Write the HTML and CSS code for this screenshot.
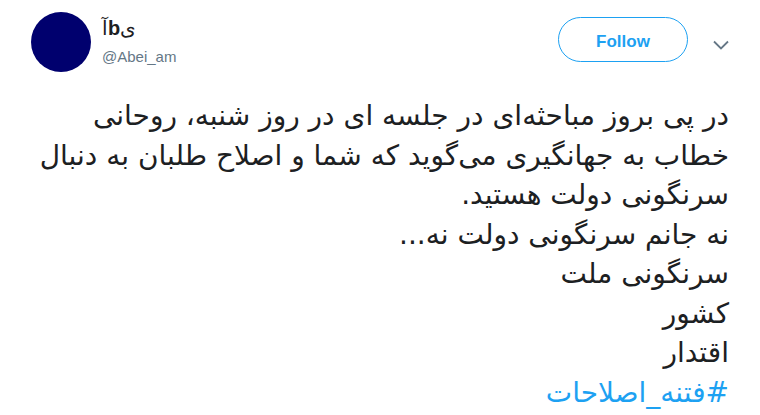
FILE: index.html
```html
<!DOCTYPE html>
<html lang="fa">
<head>
<meta charset="utf-8">
<title>Tweet</title>
<link rel="stylesheet" href="styles.css">
</head>
<body>
<div class="tweet">
	<div class="head">
		<div class="avatar"></div>
		<div class="who">
			<div class="name" dir="ltr">آ<b>b</b>ی</div>
			<div class="handle">@Abei_am</div>
		</div>
		<a class="follow" href="#">Follow</a>
		<svg class="more" width="16" height="10" viewBox="0 0 16 10"><path d="M1 1.5 L8 8.5 L15 1.5" fill="none" stroke="#657786" stroke-width="1.8"/></svg>
	</div>
	<p class="text" dir="rtl">در پی بروز مباحثه‌ای در جلسه ای در روز شنبه، روحانی خطاب به جهانگیری می‌گوید که شما و اصلاح طلبان به دنبال سرنگونی دولت هستید.<br>نه جانم سرنگونی دولت نه...<br>سرنگونی ملت<br>کشور<br>اقتدار<br><a href="#" class="tag">#فتنه_اصلاحات</a></p>
</div>
</body>
</html>
```

FILE: styles.css
```css
body {
	margin: 0;
	background: #fff;
	font-family: "DejaVu Sans", "Liberation Sans", sans-serif;
	color: #1c2022;
}
.tweet {
	padding: 12px 31px 0 31px;
}
.head {
	display: flex;
	align-items: flex-start;
}
.avatar {
	width: 60px;
	height: 60px;
	border-radius: 50%;
	background: #00006e;
	flex: none;
}
.who {
	flex: 1;
	margin-left: 11px;
	padding-top: 4px;
}
.name {
	font-family: "Liberation Sans", sans-serif;
	font-size: 20px;
	line-height: 24px;
}
.name b {
	font-weight: bold;
}
.handle {
	font-family: "Liberation Sans", sans-serif;
	font-size: 15px;
	line-height: 20px;
	color: #657786;
	margin-top: 7px;
}
.follow {
	display: flex;
	align-items: center;
	justify-content: center;
	box-sizing: border-box;
	width: 130px;
	height: 45px;
	margin-top: 5px;
	padding-top: 4px;
	border: 1px solid #1da1f2;
	border-radius: 23px;
	color: #1da1f2;
	font-family: "Liberation Sans", sans-serif;
	font-weight: bold;
	font-size: 17px;
	text-decoration: none;
}
.more {
	margin: 28px 0 0 25px;
}
.text {
	margin: 24px 0 0;
	font-size: 28px;
	line-height: 39.5px;
	text-align: right;
}
.tag {
	color: #1da1f2;
	text-decoration: none;
}
```
